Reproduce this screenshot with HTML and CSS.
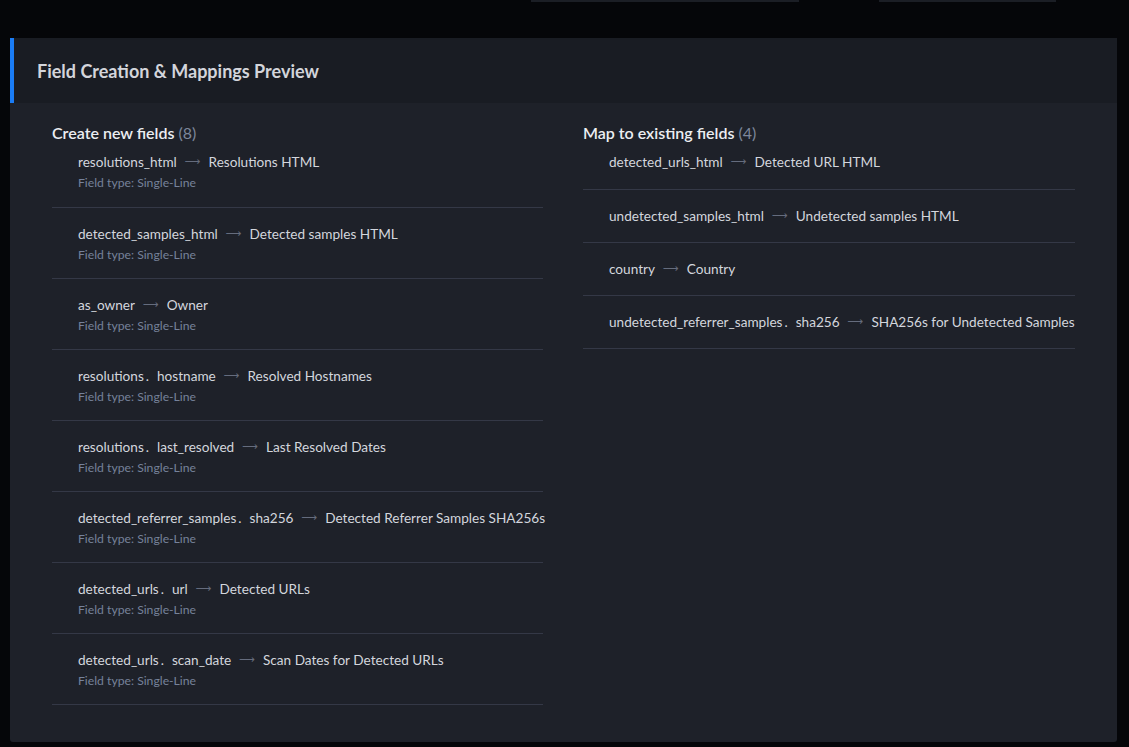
FILE: index.html
```html
<!DOCTYPE html>
<html lang="en">
<head>
<meta charset="utf-8">
<title>Field Creation &amp; Mappings Preview</title>
<link rel="stylesheet" href="styles.css">
</head>
<body>
<div class="topbar">
  <div class="tb-line tb-a"></div>
  <div class="tb-line tb-b"></div>
</div>
<section class="panel">
  <header class="panel-head">
    <h2>Field Creation &amp; Mappings Preview</h2>
  </header>
  <div class="panel-body">
    <div class="col col-new">
      <h3 class="col-title">Create new fields <span class="count">(8)</span></h3>
      <ul class="list">
        <li class="item"><div class="map"><span class="src">resolutions_html</span><span class="arrow">⟶</span><span class="dst">Resolutions HTML</span></div><div class="type">Field type: Single-Line</div></li>
        <li class="item"><div class="map"><span class="src">detected_samples_html</span><span class="arrow">⟶</span><span class="dst">Detected samples HTML</span></div><div class="type">Field type: Single-Line</div></li>
        <li class="item"><div class="map"><span class="src">as_owner</span><span class="arrow">⟶</span><span class="dst">Owner</span></div><div class="type">Field type: Single-Line</div></li>
        <li class="item"><div class="map"><span class="src">resolutions<span class="dot">.</span>hostname</span><span class="arrow">⟶</span><span class="dst">Resolved Hostnames</span></div><div class="type">Field type: Single-Line</div></li>
        <li class="item"><div class="map"><span class="src">resolutions<span class="dot">.</span>last_resolved</span><span class="arrow">⟶</span><span class="dst">Last Resolved Dates</span></div><div class="type">Field type: Single-Line</div></li>
        <li class="item"><div class="map"><span class="src">detected_referrer_samples<span class="dot">.</span>sha256</span><span class="arrow">⟶</span><span class="dst">Detected Referrer Samples SHA256s</span></div><div class="type">Field type: Single-Line</div></li>
        <li class="item"><div class="map"><span class="src">detected_urls<span class="dot">.</span>url</span><span class="arrow">⟶</span><span class="dst">Detected URLs</span></div><div class="type">Field type: Single-Line</div></li>
        <li class="item"><div class="map"><span class="src">detected_urls<span class="dot">.</span>scan_date</span><span class="arrow">⟶</span><span class="dst">Scan Dates for Detected URLs</span></div><div class="type">Field type: Single-Line</div></li>
      </ul>
    </div>
    <div class="col col-map">
      <h3 class="col-title">Map to existing fields <span class="count">(4)</span></h3>
      <ul class="list">
        <li class="item"><div class="map"><span class="src">detected_urls_html</span><span class="arrow">⟶</span><span class="dst">Detected URL HTML</span></div></li>
        <li class="item"><div class="map"><span class="src">undetected_samples_html</span><span class="arrow">⟶</span><span class="dst">Undetected samples HTML</span></div></li>
        <li class="item"><div class="map"><span class="src">country</span><span class="arrow">⟶</span><span class="dst">Country</span></div></li>
        <li class="item"><div class="map"><span class="src">undetected_referrer_samples<span class="dot">.</span>sha256</span><span class="arrow">⟶</span><span class="dst">SHA256s for Undetected Samples</span></div></li>
      </ul>
    </div>
  </div>
</section>
</body>
</html>
```
FILE: styles.css
```css
* { box-sizing: border-box; }
html, body { margin: 0; padding: 0; }
body {
  background: #050609;
  font-family: Lato, "Noto Sans", "Liberation Sans", sans-serif;
  width: 1129px;
  height: 747px;
  overflow: hidden;
}
.topbar {
  height: 38px;
  display: flex;
  align-items: flex-start;
}
.tb-line {
  height: 2px;
  background: #1b1e25;
}
.tb-a { margin-left: 531px; width: 268px; }
.tb-b { margin-left: 80px; width: 177px; }

.panel {
  margin-left: 10px;
  width: 1107px;
  height: 704px;
  background: #1e2129;
  border-radius: 0 0 3px 3px;
  display: flex;
  flex-direction: column;
}
.panel-head {
  height: 65px;
  flex: none;
  background: #191c23;
  border-left: 4px solid #1a7cf5;
  display: flex;
  align-items: center;
  padding-left: 23px;
}
.panel-head h2 {
  margin: 0;
  font-size: 18px;
  font-weight: 700;
  color: #d3d5db;
}
.panel-body {
  display: grid;
  grid-template-columns: 491px 492px;
  column-gap: 40px;
  padding: 20px 42px 0 42px;
}
.col-title {
  margin: 0;
  font-size: 16px;
  line-height: 20px;
  font-weight: 600;
  color: #eceef2;
}
.count {
  font-weight: 400;
  color: #7d879b;
}
.list {
  list-style: none;
  margin: 0;
  padding: 0;
}
.item {
  padding: 16px 0 15px 26px;
  border-bottom: 1px solid #343846;
}
.item:first-child { padding-top: 9px; padding-bottom: 16px; }
.col-map .item { padding-bottom: 16px; }
.col-map .item:first-child { padding-bottom: 17px; }
.map {
  display: flex;
  align-items: baseline;
  height: 20px;
  line-height: 20px;
  font-size: 13.6px;
  color: #d3d6dd;
  white-space: nowrap;
}
.dot { margin: 0 8px 0 2px; }
.arrow {
  align-self: center;
  line-height: 18px;
  color: #656c7d;
  font-size: 11px;
  margin: 0 8px 0 8px;
  font-family: "DejaVu Sans", sans-serif;
}
.type {
  margin-top: 3px;
  height: 16px;
  line-height: 16px;
  font-size: 12.2px;
  color: #76829a;
}
```
